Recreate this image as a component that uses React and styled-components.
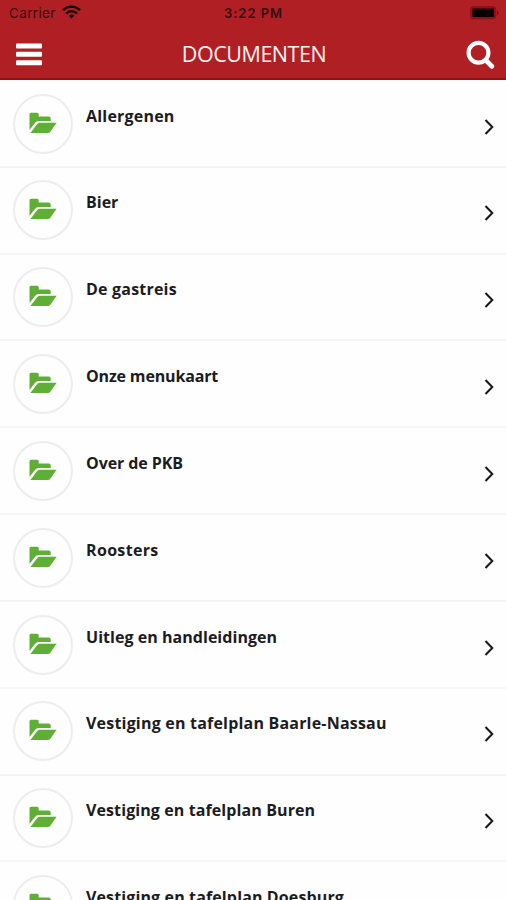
import React from 'react';
import styled, { createGlobalStyle } from 'styled-components';

const GlobalStyle = createGlobalStyle`
  * { box-sizing: border-box; }
  html, body { margin: 0; height: 100%; overflow: hidden; background: #fefefe; }
`;

const Screen = styled.main`
  width: 506px;
  height: 900px;
  overflow: hidden;
  background: #fefefe;
  font-family: 'Open Sans', 'Noto Sans', sans-serif;
`;

const Header = styled.header`
  height: 80px;
  background: #b01f24;
  border-bottom: 2px solid #8c1119;
`;

const StatusBar = styled.div`
  display: grid;
  grid-template-columns: 1fr auto 1fr;
  align-items: center;
  height: 27px;
  padding: 0 7px 0 9px;
  color: #3a090c;
  font: 13.5px/27px Inter, 'Liberation Sans', sans-serif;
`;

const Carrier = styled.div`
  display: flex;
  align-items: center;
  gap: 6px;
  letter-spacing: 0.35px;

  svg { margin-top: -3px; }
`;

const Clock = styled.time`
  margin-right: 1px;
  font-weight: 600;
  font-size: 13px;
  letter-spacing: 0.95px;
`;

const Battery = styled.svg`
  justify-self: end;
  margin-top: -1px;
`;

const TitleBar = styled.div`
  display: grid;
  grid-template-columns: 1fr auto 1fr;
  align-items: center;
  height: 53px;
  padding: 2px 11px 0 16px;
`;

const Title = styled.h1`
  margin: -2px 3px 0 0;
  padding-top: 1px;
  color: #fff4f0;
  font-size: 21.5px;
  font-weight: 500;
  line-height: 30px;
  letter-spacing: -0.45px;
`;

const IconButton = styled.button`
  display: flex;
  justify-self: ${({ $end }) => ($end ? 'end' : 'start')};
  padding: 0;
  border: 0;
  background: none;
`;

const List = styled.ul`
  margin: 0;
  padding: 1px 0 0;
  list-style: none;
`;

const Row = styled.li`
  display: flex;
  height: 86.83px;
  padding: 12.6px 12px 0 13px;
  border-bottom: 2px solid #f5f5f6;
`;

const Badge = styled.span`
  display: grid;
  place-items: center;
  flex: none;
  width: 60px;
  height: 60px;
  padding-bottom: 2px;
  border: 2px solid #ededef;
  border-radius: 50%;
`;

const Label = styled.span`
  flex: 1;
  margin: 10px 0 0 13px;
  color: #1c1c1e;
  font-size: 16px;
  font-weight: 700;
  line-height: 24px;
  white-space: nowrap;
  letter-spacing: ${({ $track }) => $track}px;
`;

const Chevron = styled.svg`
  flex: none;
  margin-top: 25px;
`;

const folders = [
  { name: 'Allergenen', track: 0.2 },
  { name: 'Bier', track: 0 },
  { name: 'De gastreis', track: 0.2 },
  { name: 'Onze menukaart', track: -0.16 },
  { name: 'Over de PKB', track: -0.08 },
  { name: 'Roosters', track: 0.33 },
  { name: 'Uitleg en handleidingen', track: 0.04 },
  { name: 'Vestiging en tafelplan Baarle-Nassau', track: 0.2 },
  { name: 'Vestiging en tafelplan Buren', track: 0.1 },
  { name: 'Vestiging en tafelplan Doesburg', track: 0.13 },
];

const WifiIcon = () => (
  <svg width="19" height="14" viewBox="0 0 19 14" fill="none" stroke="#140203" strokeWidth="2.4">
    <path d="M1 5.1a12.2 12.2 0 0 1 17 0" />
    <path d="M4 8.5a7.9 7.9 0 0 1 11 0" />
    <path d="M9.5 13.5 6.8 10.8a3.9 3.9 0 0 1 5.4 0Z" fill="#140203" stroke="none" />
  </svg>
);

const FolderIcon = () => (
  <svg width="28" height="22" viewBox="0 0 28 22" fill="#5fae35">
    <path d="M.5 18V2.200Q.5.700 2 .700h6.200q1.500 0 1.500 1.500v2.300h10q2 0 2 2v2.500H9.500Q7.500 9 6.100 10.700Z" />
    <path d="M1.400 20.900 8.300 12.100Q9.500 10.800 11.200 10.800H27.600L21.500 19.400Q20.400 20.900 18.800 20.900Z" />
  </svg>
);

export default function App() {
  return (
    <Screen>
      <GlobalStyle />
      <Header>
        <StatusBar>
          <Carrier>Carrier <WifiIcon /></Carrier>
          <Clock>3:22 PM</Clock>
          <Battery width="29" height="14" viewBox="0 0 29 14">
            <rect x=".7" y=".7" width="25" height="12" rx="2.500" fill="#921319" stroke="#8a0f15" />
            <rect x="2.500" y="2.500" width="21.500" height="8.500" fill="#080000" />
            <path d="M27 4.500q3 2.200 0 4.400Z" fill="#74090f" />
          </Battery>
        </StatusBar>
        <TitleBar>
          <IconButton aria-label="Menu">
            <svg width="26" height="23" viewBox="0 0 26 23" fill="#fff">
              <rect y=".5" width="26" height="5" rx="1" />
              <rect y="8.800" width="26" height="5" rx="1" />
              <rect y="17.300" width="26" height="5" rx="1" />
            </svg>
          </IconButton>
          <Title>DOCUMENTEN</Title>
          <IconButton $end aria-label="Zoeken">
            <svg width="29" height="29" viewBox="0 0 29 29" fill="none" stroke="#fff">
              <circle cx="12.500" cy="12.700" r="9.900" strokeWidth="4.200" />
              <path d="m19.800 20.200 6 6" strokeWidth="4.800" strokeLinecap="round" />
            </svg>
          </IconButton>
        </TitleBar>
      </Header>
      <List>
        {folders.map(({ name, track }) => (
          <Row key={name}>
            <Badge><FolderIcon /></Badge>
            <Label $track={track}>{name}</Label>
            <Chevron width="10" height="16" viewBox="0 0 10 16" fill="none" stroke="#171719" strokeWidth="2">
              <path d="m1.500 1 6.800 7-6.800 7" />
            </Chevron>
          </Row>
        ))}
      </List>
    </Screen>
  );
}
